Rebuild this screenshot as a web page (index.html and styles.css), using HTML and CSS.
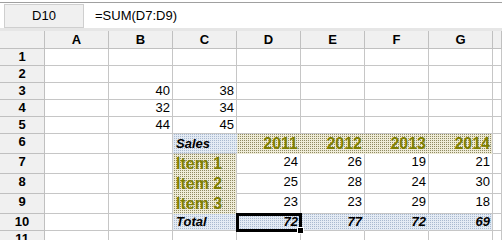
FILE: index.html
```html
<!DOCTYPE html>
<html>
<head>
<meta charset="utf-8">
<link rel="stylesheet" href="styles.css">
</head>
<body>
<div class="toolbar">
  <div class="namebox">D10</div>
  <div class="formula">=SUM(D7:D9)</div>
</div>
<div class="sheet">
  <div class="h corner"></div><div class="h">A</div><div class="h">B</div><div class="h">C</div><div class="h">D</div><div class="h">E</div><div class="h">F</div><div class="h">G</div><div class="h"></div>

  <div class="rh">1</div><div class="c"></div><div class="c"></div><div class="c"></div><div class="c"></div><div class="c"></div><div class="c"></div><div class="c"></div><div class="c"></div>
  <div class="rh">2</div><div class="c"></div><div class="c"></div><div class="c"></div><div class="c"></div><div class="c"></div><div class="c"></div><div class="c"></div><div class="c"></div>
  <div class="rh">3</div><div class="c"></div><div class="c num">40</div><div class="c num">38</div><div class="c"></div><div class="c"></div><div class="c"></div><div class="c"></div><div class="c"></div>
  <div class="rh">4</div><div class="c"></div><div class="c num">32</div><div class="c num">34</div><div class="c"></div><div class="c"></div><div class="c"></div><div class="c"></div><div class="c"></div>
  <div class="rh">5</div><div class="c"></div><div class="c num">44</div><div class="c num">45</div><div class="c"></div><div class="c"></div><div class="c"></div><div class="c"></div><div class="c"></div>

  <div class="rh">6</div><div class="c"></div><div class="c"></div><div class="c blue label">Sales</div><div class="c beige year">2011</div><div class="c beige year">2012</div><div class="c beige year">2013</div><div class="c beige year last">2014</div><div class="c"></div>
  <div class="rh">7</div><div class="c"></div><div class="c"></div><div class="c beige item">Item 1</div><div class="c num">24</div><div class="c num">26</div><div class="c num">19</div><div class="c num">21</div><div class="c"></div>
  <div class="rh">8</div><div class="c"></div><div class="c"></div><div class="c beige item">Item 2</div><div class="c num">25</div><div class="c num">28</div><div class="c num">24</div><div class="c num">30</div><div class="c"></div>
  <div class="rh">9</div><div class="c"></div><div class="c"></div><div class="c beige item">Item 3</div><div class="c num">23</div><div class="c num">23</div><div class="c num">29</div><div class="c num">18</div><div class="c"></div>
  <div class="rh">10</div><div class="c"></div><div class="c"></div><div class="c blue label tot">Total</div><div class="c blue total sel">72<span class="handle"></span></div><div class="c blue total">77</div><div class="c blue total">72</div><div class="c blue total last">69</div><div class="c"></div>
  <div class="rh">11</div><div class="c"></div><div class="c"></div><div class="c"></div><div class="c"></div><div class="c"></div><div class="c"></div><div class="c"></div><div class="c"></div>
</div>
</body>
</html>
```

FILE: styles.css
```css
html, body {
  margin: 0;
  padding: 0;
  background: #ffffff;
  font-family: "Liberation Sans", Arial, sans-serif;
  overflow: hidden;
}

.toolbar {
  box-sizing: border-box;
  border-top: 1px solid #a0a0a0;
  margin-top: 2px;
  height: 29px;
  background: #ffffff;
  border-bottom: 3px solid #e6e6e6;
  display: flex;
  align-items: flex-start;
  padding-top: 1px;
}

.namebox {
  margin-left: 4px;
  width: 80px;
  height: 24px;
  box-sizing: border-box;
  background: #f0f0f0;
  border: 1px solid #cfcfcf;
  font-size: 13px;
  line-height: 22px;
  text-align: center;
  color: #000;
}

.formula {
  margin-left: 6px;
  padding-left: 5px;
  font-size: 13px;
  line-height: 23px;
  color: #000;
}

.sheet {
  display: grid;
  grid-template-columns: 45px repeat(7, 64px) 1fr;
  grid-template-rows: 18px 17px 17px 17px 17px 17px 20px 20px 20px 20px 17px 17px;
  position: relative;
}

.h, .rh {
  background: #f0f0f0;
  border-right: 1px solid #c0c0c0;
  border-bottom: 1px solid #c0c0c0;
  box-sizing: border-box;
  font-weight: bold;
  font-size: 13px;
  text-align: center;
  color: #000;
  line-height: 17px;
}

.rh {
  line-height: 16px;
}

.c {
  border-right: 1px solid #c6c6c6;
  border-bottom: 1px solid #c6c6c6;
  box-sizing: border-box;
  font-size: 13px;
  color: #000;
  line-height: 16px;
  padding: 0 2px 0 3px;
  white-space: nowrap;
  position: relative;
}

.num {
  text-align: right;
}

.beige {
  background-color: #efecd8;
  background-image: repeating-conic-gradient(#8f8a62 0 25%, #efecd8 0 100%);
  background-size: 2px 2px;
  border-bottom-color: transparent;
}

.blue {
  background-color: #e4ebf4;
  background-image: repeating-conic-gradient(#a9b9cf 0 25%, #e4ebf4 0 100%);
  background-size: 2px 2px;
  border-right-color: transparent;
}

.year {
  border-right-color: transparent;
  color: #808000;
  font-weight: bold;
  font-size: 16px;
  text-align: right;
  line-height: 20px;
}

.item {
  color: #808000;
  font-weight: bold;
  font-size: 16px;
  line-height: 20px;
}

.label {
  font-weight: bold;
  font-style: italic;
  line-height: 20px;
}

.tot {
  line-height: 16px;
}

.total {
  text-align: right;
  font-weight: bold;
  font-style: italic;
  border-bottom-color: #c6c6c6;
}

.last {
  border-right-color: #c6c6c6;
}

.sel {
  outline: 3px solid #000;
  outline-offset: -2px;
  z-index: 2;
}

.handle {
  position: absolute;
  right: -4px;
  bottom: -4px;
  width: 5px;
  height: 5px;
  background: #000;
  border: 1px solid #fff;
}
```
